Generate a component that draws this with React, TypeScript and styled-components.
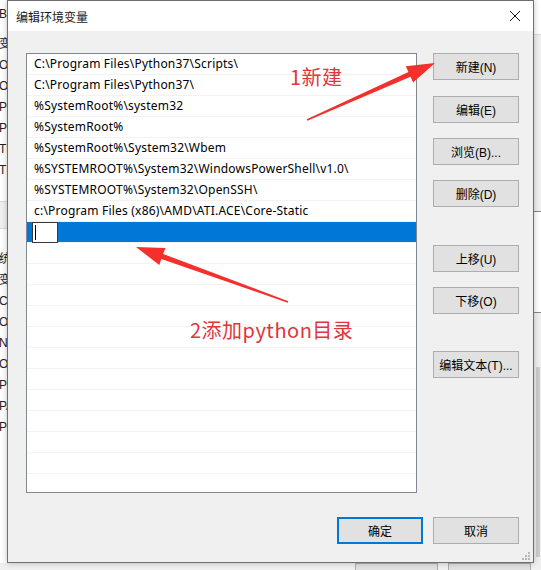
import React from "react";
import styled, { createGlobalStyle } from "styled-components";

const uiFont = `"Liberation Sans", "Noto Sans CJK SC", sans-serif`;
const listFont = `"Noto Sans", "Noto Sans CJK SC", sans-serif`;
const cjkFont = `"Noto Sans CJK SC", "Liberation Sans", sans-serif`;

const GlobalStyle = createGlobalStyle`
  html, body {
    margin: 0;
    padding: 0;
    background: #f0f0f0;
  }
`;

const Desktop = styled.div`
  position: relative;
  width: 541px;
  height: 570px;
  overflow: hidden;
  background: #f0f0f0;
  font-family: ${uiFont};
  font-size: 12px;
  color: #000;
`;

/* the parent window behind the dialog */
const BackWindow = styled.div`
  position: absolute;
  inset: 0;
  display: grid;
  grid-template-columns: 7px 1fr 8px;
  grid-template-rows: 1fr 7px;
`;

const BackLeft = styled.div`
  display: flex;
  flex-direction: column;
  overflow: hidden;
  background: #fff;
`;

const BackRow = styled.div<{ $top?: number }>`
  height: 21px;
  line-height: 21px;
  margin-top: ${(p) => p.$top ?? 0}px;
  margin-left: -1px;
  white-space: nowrap;
  color: #222;
`;

const BackBand = styled.div`
  height: 26px;
  margin-top: 20px;
  background: #f0f0f0;
  border-top: 1px solid #d9d9d9;
  border-bottom: 1px solid #d9d9d9;
`;

const BackRight = styled.div`
  grid-column: 3;
  display: flex;
  flex-direction: column;
  background: #f0f0f0;
`;

const BackRightTop = styled.div`
  height: 34px;
  background: #fff;
  border-bottom: 1px solid #dcdcdc;
`;

const BackRightList = styled.div`
  margin-top: 176px;
  height: 100px;
  background: #fff;
  border-top: 1px solid #8a8a8a;
  border-bottom: 1px solid #8a8a8a;
`;

const BackScroll = styled.div`
  margin: 54px 1px 0 3px;
  height: 190px;
  background: #cdcdcd;
`;

const BackBottom = styled.div`
  grid-column: 1 / -1;
  display: flex;
  gap: 10px;
  padding-left: 355px;
`;

const BackButton = styled.div`
  width: 83px;
  height: 20px;
  flex: none;
  box-sizing: border-box;
  background: #e1e1e1;
  border: 1px solid #adadad;
`;

const Dialog = styled.div`
  position: absolute;
  left: 7px;
  top: 0;
  width: 527px;
  height: 563px;
  box-sizing: border-box;
  border: 1px solid #707070;
  display: flex;
  flex-direction: column;
  background: #f0f0f0;
  box-shadow: 0 0 6px rgba(0, 0, 0, 0.25);
`;

const TitleBar = styled.div`
  height: 30px;
  flex: none;
  background: #fff;
  display: flex;
  align-items: center;
  justify-content: space-between;
  padding: 0 8px 0 8px;
  font-family: ${cjkFont};
  font-size: 12px;
  color: #1a1a1a;
`;

const CloseBox = styled.div`
  width: 20px;
  height: 20px;
  display: flex;
  align-items: center;
  justify-content: center;
`;

const Body = styled.div`
  position: relative;
  flex: 1;
  display: grid;
  grid-template-columns: 391px 86px;
  grid-template-rows: 440px 27px;
  column-gap: 16px;
  row-gap: 24px;
  padding: 22px 14px 18px 18px;
`;

const List = styled.div`
  box-sizing: border-box;
  border: 1px solid #828790;
  background: #fff;
  overflow: hidden;
  font-family: ${listFont};
  letter-spacing: 0.2px;
`;

const Row = styled.div<{ $selected?: boolean }>`
  height: 21px;
  box-sizing: border-box;
  border-bottom: 1px solid #f2f2f2;
  padding-left: 7px;
  line-height: 20px;
  white-space: nowrap;
  background: ${(p) => (p.$selected ? "#0078d7" : "transparent")};
  display: flex;
  align-items: center;
`;

const EditBox = styled.div`
  margin-left: -2px;
  width: 26px;
  height: 21px;
  box-sizing: border-box;
  border: 1px solid #3a3a3a;
  background: #fff;
  display: flex;
  align-items: center;
  padding-left: 2px;
`;

const Caret = styled.span`
  width: 1px;
  height: 15px;
  background: #000;
`;

const SideButtons = styled.div`
  display: flex;
  flex-direction: column;
`;

const Button = styled.button<{ $top?: number; $primary?: boolean }>`
  width: 86px;
  height: 27px;
  margin: ${(p) => p.$top ?? 0}px 0 0 0;
  padding: 0;
  box-sizing: border-box;
  background: #e1e1e1;
  border: ${(p) => (p.$primary ? "2px solid #0078d7" : "1px solid #adadad")};
  font-family: ${uiFont};
  font-size: 12px;
  color: #000;
  cursor: default;
`;

const Footer = styled.div`
  grid-column: 1 / -1;
  display: flex;
  justify-content: flex-end;
  gap: 10px;
`;

const Grip = styled.div`
  position: absolute;
  right: 2px;
  bottom: 2px;
  width: 10px;
  height: 10px;
`;

const Overlay = styled.div`
  position: absolute;
  inset: 0;
  pointer-events: none;
`;

const Note = styled.div<{ $x: number; $y: number }>`
  position: absolute;
  left: ${(p) => p.$x}px;
  top: ${(p) => p.$y}px;
  font-family: ${cjkFont};
  font-size: 20px;
  line-height: 1;
  letter-spacing: 0.5px;
  color: #e0353b;
  white-space: nowrap;
`;

const paths = [
  "C:\\Program Files\\Python37\\Scripts\\",
  "C:\\Program Files\\Python37\\",
  "%SystemRoot%\\system32",
  "%SystemRoot%",
  "%SystemRoot%\\System32\\Wbem",
  "%SYSTEMROOT%\\System32\\WindowsPowerShell\\v1.0\\",
  "%SYSTEMROOT%\\System32\\OpenSSH\\",
  "c:\\Program Files (x86)\\AMD\\ATI.ACE\\Core-Static",
];

const backTop = ["B", "变", "O", "O", "Pa", "Py", "TE", "TM"];
const backBottom = ["统", "变", "Co", "O", "N", "O", "Pa", "PA", "PR"];

type Pt = [number, number];

// tapered arrow polygon from tail to tip
const arrowPoints = (tail: Pt, tip: Pt): string => {
  const dx = tip[0] - tail[0];
  const dy = tip[1] - tail[1];
  const len = Math.hypot(dx, dy);
  const ux = dx / len;
  const uy = dy / len;
  const nx = -uy;
  const ny = ux;
  const head = 28;
  const bx = tip[0] - ux * head;
  const by = tip[1] - uy * head;
  const pts: Pt[] = [
    [tail[0] + nx * 0.8, tail[1] + ny * 0.8],
    [bx + nx * 2.6, by + ny * 2.6],
    [bx + nx * 9, by + ny * 9],
    tip,
    [bx - nx * 9, by - ny * 9],
    [bx - nx * 2.6, by - ny * 2.6],
    [tail[0] - nx * 0.8, tail[1] - ny * 0.8],
  ];
  return pts.map((p) => `${p[0].toFixed(1)},${p[1].toFixed(1)}`).join(" ");
};

const App = () => {
  const emptyRows = Array.from({ length: 12 });
  return (
    <>
      <GlobalStyle />
      <Desktop>
        <BackWindow>
          <BackLeft>
            {backTop.map((t, i) => (
              <BackRow key={i} $top={i === 0 ? 4 : i === 1 ? 9 : 0}>
                {t}
              </BackRow>
            ))}
            <BackBand />
            {backBottom.map((t, i) => (
              <BackRow key={i} $top={i === 0 ? 20 : 0}>
                {t}
              </BackRow>
            ))}
          </BackLeft>
          <div />
          <BackRight>
            <BackRightTop />
            <BackRightList />
            <BackScroll />
          </BackRight>
          <BackBottom>
            <BackButton />
            <BackButton />
          </BackBottom>
        </BackWindow>

        <Dialog>
          <TitleBar>
            <span>编辑环境变量</span>
            <CloseBox>
              <svg width="12" height="12" viewBox="0 0 12 12">
                <path d="M1 1 L11 11 M11 1 L1 11" stroke="#111" strokeWidth="1" fill="none" />
              </svg>
            </CloseBox>
          </TitleBar>
          <Body>
            <List>
              {paths.map((p) => (
                <Row key={p}>{p}</Row>
              ))}
              <Row $selected>
                <EditBox>
                  <Caret />
                </EditBox>
              </Row>
              {emptyRows.map((_, i) => (
                <Row key={i} />
              ))}
            </List>
            <SideButtons>
              <Button>新建(N)</Button>
              <Button $top={16}>编辑(E)</Button>
              <Button $top={15}>浏览(B)...</Button>
              <Button $top={15}>删除(D)</Button>
              <Button $top={38}>上移(U)</Button>
              <Button $top={15}>下移(O)</Button>
              <Button $top={37}>编辑文本(T)...</Button>
            </SideButtons>
            <Footer>
              <Button $primary>确定</Button>
              <Button>取消</Button>
            </Footer>
            <Grip>
              <svg width="10" height="10" viewBox="0 0 10 10" fill="#b8b8b8">
                <rect x="7" y="1" width="2" height="2" />
                <rect x="4" y="4" width="2" height="2" />
                <rect x="7" y="4" width="2" height="2" />
                <rect x="1" y="7" width="2" height="2" />
                <rect x="4" y="7" width="2" height="2" />
                <rect x="7" y="7" width="2" height="2" />
              </svg>
            </Grip>
          </Body>
        </Dialog>

        <Overlay>
          <svg width="541" height="570" viewBox="0 0 541 570">
            <polygon points={arrowPoints([307, 120], [435, 63])} fill="#f3302b" />
            <polygon points={arrowPoints([288, 302], [136, 247])} fill="#f3302b" />
          </svg>
          <Note $x={290} $y={67}>1新建</Note>
          <Note $x={190} $y={320}>2添加python目录</Note>
        </Overlay>
      </Desktop>
    </>
  );
};

export default App;
